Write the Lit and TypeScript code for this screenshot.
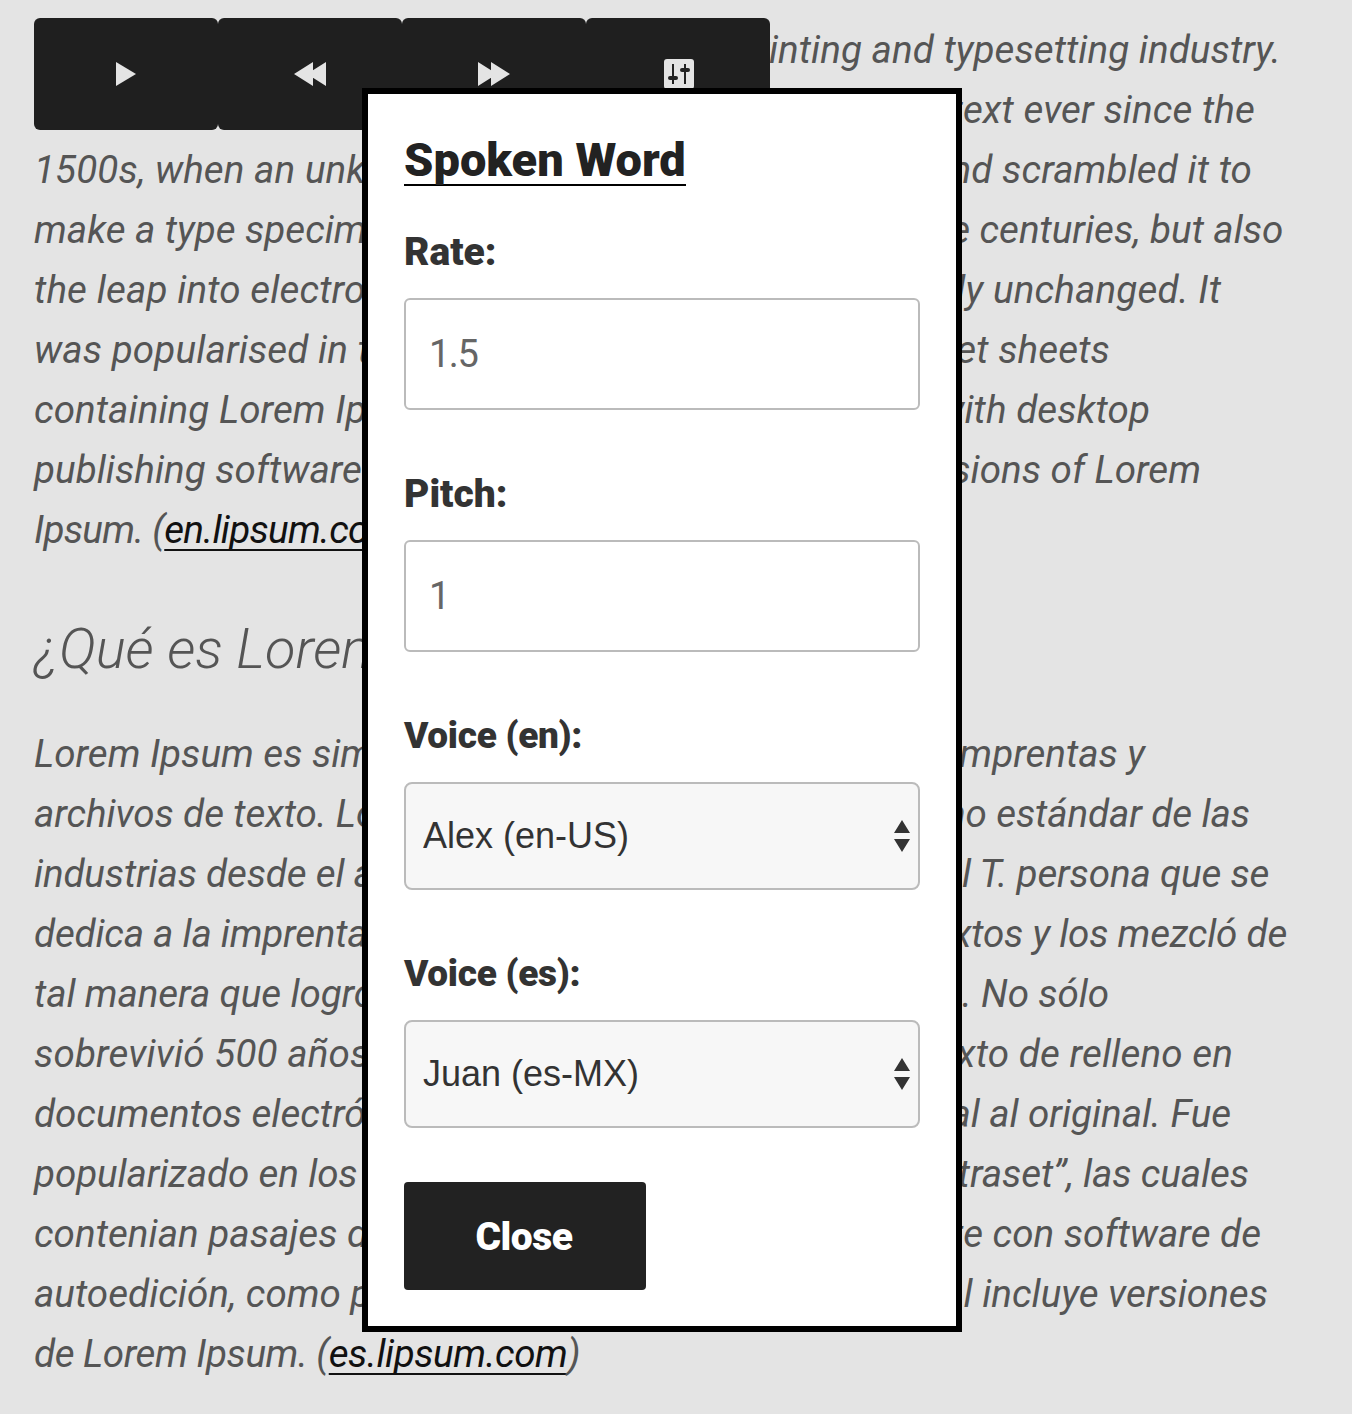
import { LitElement, html, css } from "lit";
import { customElement } from "lit/decorators.js";

type Line = [string, number];
const en: Line[] = [
  ["Lorem Ipsum is simply dummy text of the printing and typesetting industry.", 1281],
  ["Lorem Ipsum has been the industry's standard dummy text ever since the", 1255],
  ["1500s, when an unknown printer took a galley of type and scrambled it to", 1252],
  ["make a type specimen book. It has survived not only five centuries, but also", 1282],
  ["the leap into electronic typesetting, remaining essentially unchanged. It", 1221],
  ["was popularised in the 1960s with the release of Letraset sheets", 1110],
  ["containing Lorem Ipsum passages, and more recently with desktop", 1150],
  ["publishing software like Aldus PageMaker including versions of Lorem", 1201],
];
const es: Line[] = [
  ["Lorem Ipsum es simplemente el texto de relleno de las imprentas y", 1145],
  ["archivos de texto. Lorem Ipsum ha sido el texto de relleno estándar de las", 1250],
  ["industrias desde el año 1500, cuando un impresor (N. del T. persona que se", 1270],
  ["dedica a la imprenta) desconocido usó una galería de textos y los mezcló de", 1287],
  ["tal manera que logró hacer un libro de textos especimen. No sólo", 1109],
  ["sobrevivió 500 años, sino que tambien ingresó como texto de relleno en", 1233],
  ["documentos electrónicos, quedando esencialmente igual al original. Fue", 1231],
  ["popularizado en los 60s con la creación de las hojas “Letraset”, las cuales", 1249],
  ["contenian pasajes de Lorem Ipsum, y más recientemente con software de", 1261],
  ["autoedición, como por ejemplo Aldus PageMaker, el cual incluye versiones", 1268],
];

const ctx = document.createElement("canvas").getContext("2d")!;
function spacing(text: string, right: number) {
  ctx.font = 'italic 38.6px "Roboto"';
  return `letter-spacing:${((right - 34 - ctx.measureText(text).width) / text.length).toFixed(3)}px`;
}

@customElement("app-root")
export class AppRoot extends LitElement {
  static styles = css`
    :host { display: block; position: relative; height: 1414px; overflow: hidden; background: #e4e4e4; font-family: "Roboto", "Liberation Sans", sans-serif; }
    .page { padding: 20px 34px 0; }
    .prose { margin: 0; font-size: 38.6px; line-height: 60px; font-style: italic; color: #555; white-space: nowrap; }
    .line { display: block; }
    .prose a { color: #111; text-decoration: underline; text-decoration-thickness: 2px; text-underline-offset: 6px; text-decoration-skip-ink: none; }
    h2 { margin: 59px 0 45px; font-size: 56px; line-height: 60px; font-weight: 300; font-style: italic; color: #555; white-space: nowrap; }
    .bar { position: absolute; left: 34px; top: 18px; display: flex; box-shadow: 0 3px 0 #e4e4e4; }
    .bar button { width: 184px; height: 112px; padding: 0; border: 0; border-radius: 6px; background: #1f1f1f; display: flex; align-items: center; justify-content: center; }
    .bar .cog { padding-left: 2px; }
    .modal { position: absolute; left: 362px; top: 88px; width: 600px; height: 1244px; box-sizing: border-box; border: 6px solid #000; background: #fff; padding: 32px 36px 0; display: flex; flex-direction: column; align-items: flex-start; color: #222; }
    h3 { margin: 0 0 36px; font-size: 47px; line-height: 68px; font-weight: 900; border-bottom: 2px solid #000; height: 58px; }
    label { display: block; font-size: 39px; line-height: 60px; font-weight: 900; color: #333; margin-bottom: 16px; }
    label.voice { font-size: 37px; letter-spacing: -0.3px; }
    input { display: block; box-sizing: border-box; width: 516px; height: 112px; border: 2px solid #bbb; border-radius: 6px; background: #fff; padding: 0 23px; margin: 0 0 54px; font: 400 38px "Roboto", sans-serif; letter-spacing: -1.5px; color: #666; }
    .sel { position: relative; width: 516px; height: 108px; margin-bottom: 54px; }
    select { appearance: none; -webkit-appearance: none; display: block; width: 100%; height: 100%; box-sizing: border-box; border: 2px solid #bbb; border-radius: 8px; background: #f7f7f7; padding: 0 17px 2px; font: 400 36px "Liberation Sans", sans-serif; color: #333; }
    .sel svg { position: absolute; right: 9px; top: 36px; }
    .close { width: 242px; height: 108px; padding: 2px 2px 0 0; border: 0; border-radius: 4px; background: #222; color: #fff; font: 900 39px "Roboto", sans-serif; letter-spacing: -0.5px; }
  `;

  render() {
    const line = ([t, r]: Line) => html`<span class="line" style=${spacing(t, r)}>${t}</span>`;
    return html`
      <div class="page">
        <p class="prose">${en.map(line)}<span class="line" style=${spacing("Ipsum. (en.lipsum.com)", 413)}>Ipsum. (<a href="#">en.lipsum.com</a>)</span></p>
        <h2>¿Qué es Lorem Ipsum?</h2>
        <p class="prose">${es.map(line)}<span class="line" style=${spacing("de Lorem Ipsum. (es.lipsum.com)", 580)}>de Lorem Ipsum. (<a href="#">es.lipsum.com</a>)</span></p>
      </div>
      <div class="bar">
        <button aria-label="Play"><svg width="22" height="24" viewBox="0 0 22 24"><path fill="#e4e4e4" d="M1 0 21 12 1 24Z" /></svg></button>
        <button aria-label="Rewind"><svg width="32" height="24" viewBox="0 0 32 24"><path fill="#e4e4e4" d="M0 12 19 0V24ZM32 0V24L13 12Z" /></svg></button>
        <button aria-label="Forward"><svg width="32" height="24" viewBox="0 0 32 24"><path fill="#e4e4e4" d="M0 0 19 12 0 24ZM13 0 32 12 13 24Z" /></svg></button>
        <button class="cog" aria-label="Settings"><svg width="30" height="30" viewBox="0 0 30 30"><rect width="30" height="30" rx="3" fill="#e4e4e4" /><path fill="none" stroke="#222" stroke-width="2" d="M9 5V25M21 5V25" /><rect x="4" y="17" width="10" height="4" rx="2" fill="#222" /><rect x="16" y="9" width="10" height="4" rx="2" fill="#222" /></svg></button>
      </div>
      <div class="modal">
        <h3>Spoken Word</h3>
        <label>Rate:</label>
        <input value="1.5" />
        <label>Pitch:</label>
        <input value="1" />
        <label class="voice">Voice (en):</label>
        <div class="sel"><select><option>Alex (en-US)</option></select>${this.arrows()}</div>
        <label class="voice">Voice (es):</label>
        <div class="sel"><select><option>Juan (es-MX)</option></select>${this.arrows()}</div>
        <button class="close">Close</button>
      </div>
    `;
  }

  arrows() {
    return html`<svg width="18" height="34" viewBox="0 0 18 34"><path fill="#333" d="M9 2 17 15H1ZM1 21H17L9 34Z" /></svg>`;
  }
}
